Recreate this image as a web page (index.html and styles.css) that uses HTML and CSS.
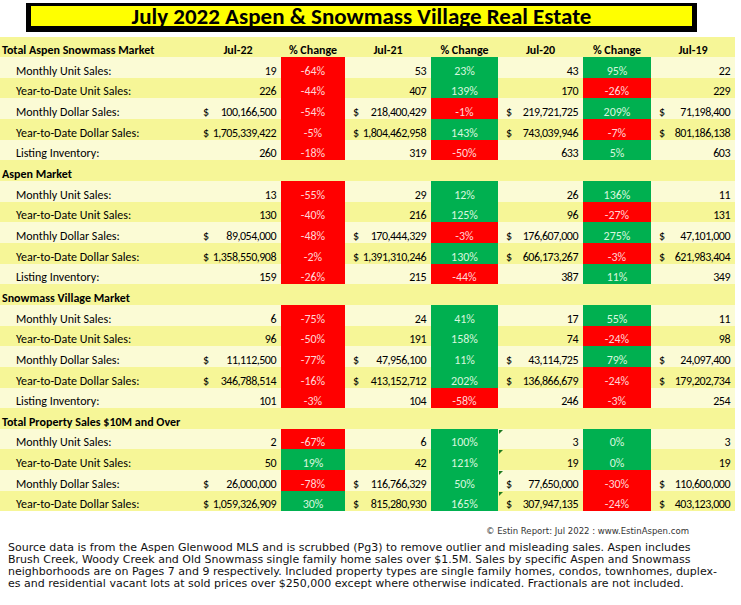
FILE: index.html
```html
<!DOCTYPE html>
<html>
<head>
<meta charset="utf-8">
<link rel="stylesheet" href="styles.css">
</head>
<body>
<div class="page">
  <div class="title-wrap">
    <h1 class="title">July 2022 Aspen &amp; Snowmass Village Real Estate</h1>
  </div>
  <table class="market">
    <colgroup>
      <col class="c-label"><col class="c-v1"><col class="c-p1"><col class="c-v2"><col class="c-p2"><col class="c-v3"><col class="c-p3"><col class="c-v4">
    </colgroup>
    <tbody>
      <tr class="head"><th class="sec">Total Aspen Snowmass Market</th><th>Jul-22</th><th>% Change</th><th>Jul-21</th><th>% Change</th><th>Jul-20</th><th>% Change</th><th>Jul-19</th></tr>
      <tr><td class="lbl">Monthly Unit Sales:</td><td class="num">19</td><td class="pct red">-64%</td><td class="num">53</td><td class="pct grn">23%</td><td class="num">43</td><td class="pct grn">95%</td><td class="num">22</td></tr>
      <tr><td class="lbl">Year-to-Date Unit Sales:</td><td class="num">226</td><td class="pct red">-44%</td><td class="num">407</td><td class="pct grn">139%</td><td class="num">170</td><td class="pct red">-26%</td><td class="num">229</td></tr>
      <tr><td class="lbl">Monthly Dollar Sales:</td><td class="num"><span class="d">$</span>100,166,500</td><td class="pct red">-54%</td><td class="num"><span class="d">$</span>218,400,429</td><td class="pct red">-1%</td><td class="num"><span class="d">$</span>219,721,725</td><td class="pct grn">209%</td><td class="num"><span class="d">$</span>71,198,400</td></tr>
      <tr><td class="lbl">Year-to-Date Dollar Sales:</td><td class="num"><span class="d">$</span>1,705,339,422</td><td class="pct red">-5%</td><td class="num"><span class="d">$</span>1,804,462,958</td><td class="pct grn">143%</td><td class="num"><span class="d">$</span>743,039,946</td><td class="pct red">-7%</td><td class="num"><span class="d">$</span>801,186,138</td></tr>
      <tr><td class="lbl">Listing Inventory:</td><td class="num">260</td><td class="pct red">-18%</td><td class="num">319</td><td class="pct red">-50%</td><td class="num">633</td><td class="pct grn">5%</td><td class="num">603</td></tr>

      <tr><th class="sec" colspan="8">Aspen Market</th></tr>
      <tr><td class="lbl">Monthly Unit Sales:</td><td class="num">13</td><td class="pct red">-55%</td><td class="num">29</td><td class="pct grn">12%</td><td class="num">26</td><td class="pct grn">136%</td><td class="num">11</td></tr>
      <tr><td class="lbl">Year-to-Date Unit Sales:</td><td class="num">130</td><td class="pct red">-40%</td><td class="num">216</td><td class="pct grn">125%</td><td class="num">96</td><td class="pct red">-27%</td><td class="num">131</td></tr>
      <tr><td class="lbl">Monthly Dollar Sales:</td><td class="num"><span class="d">$</span>89,054,000</td><td class="pct red">-48%</td><td class="num"><span class="d">$</span>170,444,329</td><td class="pct red">-3%</td><td class="num"><span class="d">$</span>176,607,000</td><td class="pct grn">275%</td><td class="num"><span class="d">$</span>47,101,000</td></tr>
      <tr><td class="lbl">Year-to-Date Dollar Sales:</td><td class="num"><span class="d">$</span>1,358,550,908</td><td class="pct red">-2%</td><td class="num"><span class="d">$</span>1,391,310,246</td><td class="pct grn">130%</td><td class="num"><span class="d">$</span>606,173,267</td><td class="pct red">-3%</td><td class="num"><span class="d">$</span>621,983,404</td></tr>
      <tr><td class="lbl">Listing Inventory:</td><td class="num">159</td><td class="pct red">-26%</td><td class="num">215</td><td class="pct red">-44%</td><td class="num">387</td><td class="pct grn">11%</td><td class="num">349</td></tr>

      <tr><th class="sec" colspan="8">Snowmass Village Market</th></tr>
      <tr><td class="lbl">Monthly Unit Sales:</td><td class="num">6</td><td class="pct red">-75%</td><td class="num">24</td><td class="pct grn">41%</td><td class="num">17</td><td class="pct grn">55%</td><td class="num">11</td></tr>
      <tr><td class="lbl">Year-to-Date Unit Sales:</td><td class="num">96</td><td class="pct red">-50%</td><td class="num">191</td><td class="pct grn">158%</td><td class="num">74</td><td class="pct red">-24%</td><td class="num">98</td></tr>
      <tr><td class="lbl">Monthly Dollar Sales:</td><td class="num"><span class="d">$</span>11,112,500</td><td class="pct red">-77%</td><td class="num"><span class="d">$</span>47,956,100</td><td class="pct grn">11%</td><td class="num"><span class="d">$</span>43,114,725</td><td class="pct grn">79%</td><td class="num"><span class="d">$</span>24,097,400</td></tr>
      <tr><td class="lbl">Year-to-Date Dollar Sales:</td><td class="num"><span class="d">$</span>346,788,514</td><td class="pct red">-16%</td><td class="num"><span class="d">$</span>413,152,712</td><td class="pct grn">202%</td><td class="num"><span class="d">$</span>136,866,679</td><td class="pct red">-24%</td><td class="num"><span class="d">$</span>179,202,734</td></tr>
      <tr><td class="lbl">Listing Inventory:</td><td class="num">101</td><td class="pct red">-3%</td><td class="num">104</td><td class="pct red">-58%</td><td class="num">246</td><td class="pct red">-3%</td><td class="num">254</td></tr>

      <tr><th class="sec" colspan="8">Total Property Sales $10M and Over</th></tr>
      <tr><td class="lbl">Monthly Unit Sales:</td><td class="num">2</td><td class="pct red">-67%</td><td class="num">6</td><td class="pct grn">100%</td><td class="num flag">3</td><td class="pct grn">0%</td><td class="num">3</td></tr>
      <tr><td class="lbl">Year-to-Date Unit Sales:</td><td class="num">50</td><td class="pct grn">19%</td><td class="num">42</td><td class="pct grn">121%</td><td class="num flag">19</td><td class="pct grn">0%</td><td class="num">19</td></tr>
      <tr><td class="lbl">Monthly Dollar Sales:</td><td class="num"><span class="d">$</span>26,000,000</td><td class="pct red">-78%</td><td class="num"><span class="d">$</span>116,766,329</td><td class="pct grn">50%</td><td class="num flag"><span class="d">$</span>77,650,000</td><td class="pct red">-30%</td><td class="num"><span class="d">$</span>110,600,000</td></tr>
      <tr><td class="lbl">Year-to-Date Dollar Sales:</td><td class="num"><span class="d">$</span>1,059,326,909</td><td class="pct grn">30%</td><td class="num"><span class="d">$</span>815,280,930</td><td class="pct grn">165%</td><td class="num flag"><span class="d">$</span>307,947,135</td><td class="pct red">-24%</td><td class="num"><span class="d">$</span>403,123,000</td></tr>
    </tbody>
  </table>
  <p class="credit">© Estin Report: Jul 2022 : www.EstinAspen.com</p>
  <p class="note">Source data is from the Aspen Glenwood MLS and is scrubbed (Pg3) to remove outlier and misleading sales. Aspen includes<br>Brush Creek, Woody Creek and Old Snowmass single family home sales over $1.5M. Sales by specific Aspen and Snowmass<br>neighborhoods are on Pages 7 and 9 respectively. Included property types are single family homes, condos, townhomes, duplex-<br>es and residential vacant lots at sold prices over $250,000 except where otherwise indicated. Fractionals are not included.</p>
</div>
</body>
</html>
```

FILE: styles.css
```css
html, body {
  margin: 0;
  padding: 0;
  background: #ffffff;
}

.page {
  width: 741px;
  font-family: Carlito, Lato, "Noto Sans", sans-serif;
  color: #000000;
}

.title-wrap {
  padding: 3px 0 0 26px;
}

.title {
  margin: 0;
  width: 661px;
  height: 20px;
  background: #ffff00;
  border-style: solid;
  border-color: #000000;
  border-width: 3px 5px 6px 5px;
  font-family: Carlito, Lato, sans-serif;
  font-weight: 700;
  font-size: 23px;
  line-height: 21px;
  text-align: center;
  color: #000000;
  overflow: hidden;
}

.market {
  margin-top: 5px;
  width: 735px;
  border-collapse: collapse;
  table-layout: fixed;
  font-size: 12px;
}

.c-label { width: 195px; }
.c-v1 { width: 86px; }
.c-p1 { width: 64px; }
.c-v2 { width: 86px; }
.c-p2 { width: 67px; }
.c-v3 { width: 85px; }
.c-p3 { width: 68px; }
.c-v4 { width: 84px; }

.market tr {
  height: 20.67px;
  background: #fbfbd5;
}

.market tr:nth-child(odd) {
  background: #f6f697;
}

.market tr.head {
  height: 20px;
}

.market th,
.market td {
  padding: 0;
  white-space: nowrap;
  vertical-align: bottom;
  line-height: 14px;
  overflow: hidden;
}

.market th {
  font-weight: 700;
  text-align: center;
}

.market th.sec {
  text-align: left;
  padding-left: 2px;
}

.lbl {
  padding-left: 16px !important;
}

.num {
  text-align: right;
  padding-right: 5px !important;
  position: relative;
  letter-spacing: -0.5px;
}

.num .d {
  float: left;
  padding-left: 8px;
  letter-spacing: 0;
}

.pct {
  text-align: center;
}

.pct.red {
  background: #ff0000;
  color: #ffd6d6;
}

.pct.grn {
  background: #00b050;
  color: #d8f7df;
}

.flag::before {
  content: "";
  position: absolute;
  left: 1px;
  top: 1px;
  border-style: solid;
  border-width: 4px 4px 0 0;
  border-color: #1f7a1f transparent transparent transparent;
}

.credit {
  margin: 14px 0 0 0;
  padding-right: 52px;
  text-align: right;
  font-family: "DejaVu Sans Condensed", "DejaVu Sans", sans-serif;
  font-size: 9.5px;
  line-height: 12px;
  color: #333333;
}

.note {
  margin: 5px 0 0 8px;
  font-family: "DejaVu Sans", sans-serif;
  font-size: 11px;
  letter-spacing: 0;
  line-height: 12px;
  color: #111111;
}
```
